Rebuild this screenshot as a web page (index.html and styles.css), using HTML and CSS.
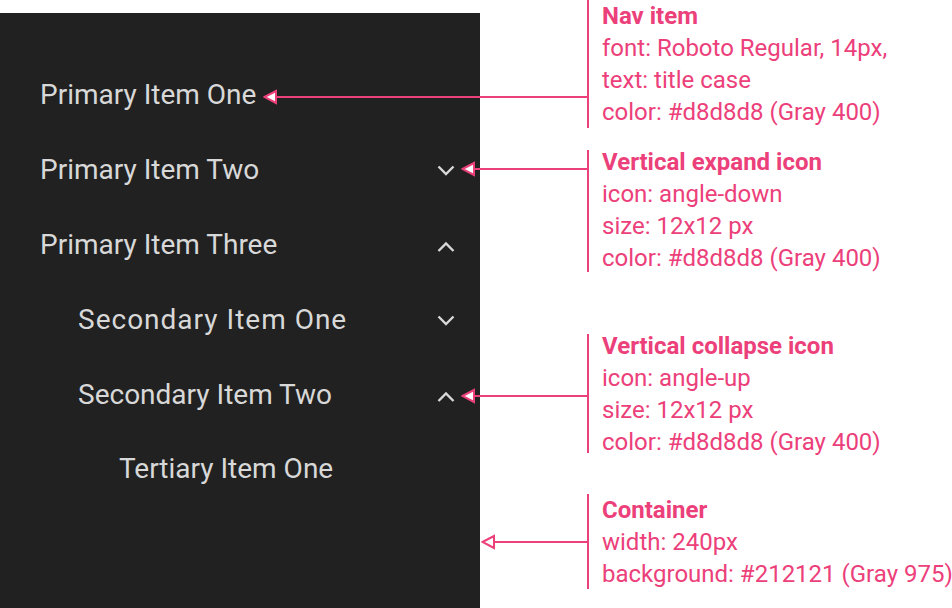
FILE: index.html
```html
<!DOCTYPE html>
<html lang="en">
<head>
<meta charset="utf-8">
<title>Nav drawer spec</title>
<link rel="stylesheet" href="styles.css">
</head>
<body>
<div class="canvas">
  <nav class="panel">
    <div class="item lvl1"><span class="label">Primary Item One</span></div>
    <div class="item lvl1"><span class="label">Primary Item Two</span>
      <svg class="chev" viewBox="0 0 24 24"><path d="M4.5 8.5 L12 16 L19.5 8.5"/></svg></div>
    <div class="item lvl1"><span class="label">Primary Item Three</span>
      <svg class="chev" viewBox="0 0 24 24"><path d="M4.5 18 L12 10.5 L19.5 18"/></svg></div>
    <div class="item lvl2"><span class="label spaced">Secondary Item One</span>
      <svg class="chev" viewBox="0 0 24 24"><path d="M4.5 8.5 L12 16 L19.5 8.5"/></svg></div>
    <div class="item lvl2"><span class="label">Secondary Item Two</span>
      <svg class="chev" viewBox="0 0 24 24"><path d="M4.5 18 L12 10.5 L19.5 18"/></svg></div>
    <div class="item lvl3"><span class="label">Tertiary Item One</span></div>
  </nav>

  <div class="notes">
    <div class="note note-1">
      <span class="rule"></span>
      <div class="note-text">
        <div class="note-title">Nav item</div>
        <div>font: Roboto Regular, 14px,</div>
        <div>text: title case</div>
        <div>color: #d8d8d8 (Gray 400)</div>
      </div>
      <div class="arrow arrow-1"><svg class="head" viewBox="0 0 14 16"><polygon points="1.5,8 13,2 13,14"/></svg><span class="shaft"></span></div>
    </div>
    <div class="note note-2">
      <span class="rule"></span>
      <div class="note-text">
        <div class="note-title">Vertical expand icon</div>
        <div>icon: angle-down</div>
        <div>size: 12x12 px</div>
        <div>color: #d8d8d8 (Gray 400)</div>
      </div>
      <div class="arrow arrow-2"><svg class="head" viewBox="0 0 14 16"><polygon points="1.5,8 13,2 13,14"/></svg><span class="shaft"></span></div>
    </div>
    <div class="note note-3">
      <span class="rule"></span>
      <div class="note-text">
        <div class="note-title">Vertical collapse icon</div>
        <div>icon: angle-up</div>
        <div>size: 12x12 px</div>
        <div>color: #d8d8d8 (Gray 400)</div>
      </div>
      <div class="arrow arrow-3"><svg class="head" viewBox="0 0 14 16"><polygon points="1.5,8 13,2 13,14"/></svg><span class="shaft"></span></div>
    </div>
    <div class="note note-4">
      <span class="rule"></span>
      <div class="note-text">
        <div class="note-title">Container</div>
        <div>width: 240px</div>
        <div>background: #212121 (Gray 975)</div>
      </div>
      <div class="arrow arrow-4"><svg class="head" viewBox="0 0 14 16"><polygon points="1.5,8 13,2 13,14"/></svg><span class="shaft"></span></div>
    </div>
  </div>
</div>
</body>
</html>
```

FILE: styles.css
```css
* { box-sizing: border-box; }

html, body {
  margin: 0;
  padding: 0;
  background: #ffffff;
}

body {
  font-family: Roboto, "Noto Sans", "Liberation Sans", sans-serif;
}

.canvas {
  display: flex;
  width: 952px;
  height: 608px;
  overflow: hidden;
}

/* ---------- nav drawer ---------- */
.panel {
  flex: 0 0 480px;
  width: 480px;
  margin-top: 13px;
  padding-top: 44.5px;
  background: #212121;
  display: flex;
  flex-direction: column;
}

.item {
  height: 74.9px;
  flex: 0 0 74.9px;
  display: flex;
  align-items: center;
  justify-content: space-between;
  padding-right: 21.6px;
  color: #d8d8d8;
  font-size: 28px;
  line-height: 32px;
}

.lvl1 { padding-left: 40px; }
.lvl2 { padding-left: 78px; }
.lvl3 { padding-left: 119px; }

.spaced { letter-spacing: 1px; }

.chev {
  width: 24px;
  height: 24px;
  flex: 0 0 24px;
  fill: none;
  stroke: #d8d8d8;
  stroke-width: 2.4;
  stroke-linejoin: miter;
}

/* ---------- annotations ---------- */
.notes {
  display: flex;
  flex-direction: column;
  margin-left: 107px;
  color: #ec407a;
  font-size: 24px;
  line-height: 32px;
}

.note {
  position: relative;
  display: flex;
  align-items: stretch;
}

.rule {
  flex: 0 0 2px;
  width: 2px;
  background: #ec407a;
}

.note-text {
  padding-left: 13px;
  white-space: nowrap;
}

.note-title { font-weight: 700; }

.note-2 { margin-top: 18px; }
.note-2 .rule { margin: 4px 0 2px; }
.note-3 { margin-top: 56px; }
.note-3 .rule { margin: 4px 0 5px; }
.note-4 { margin-top: 36px; }
.note-4 .rule { margin: 0 0 1px; }

.arrow {
  position: absolute;
  height: 16px;
  display: flex;
  align-items: center;
}

.head {
  width: 14px;
  height: 16px;
  flex: 0 0 14px;
  fill: #ffffff;
  stroke: #ec407a;
  stroke-width: 2;
  stroke-linejoin: miter;
}

.shaft {
  flex: 1;
  height: 2px;
  margin-left: -1px;
  background: #ec407a;
}

.arrow-1 { left: -324px; width: 325px; top: 89.3px; }
.arrow-2 { left: -126px; width: 127px; top: 15px; }
.arrow-3 { left: -126px; width: 127px; top: 58px; }
.arrow-4 { left: -106px; width: 107px; top: 40px; }
```
